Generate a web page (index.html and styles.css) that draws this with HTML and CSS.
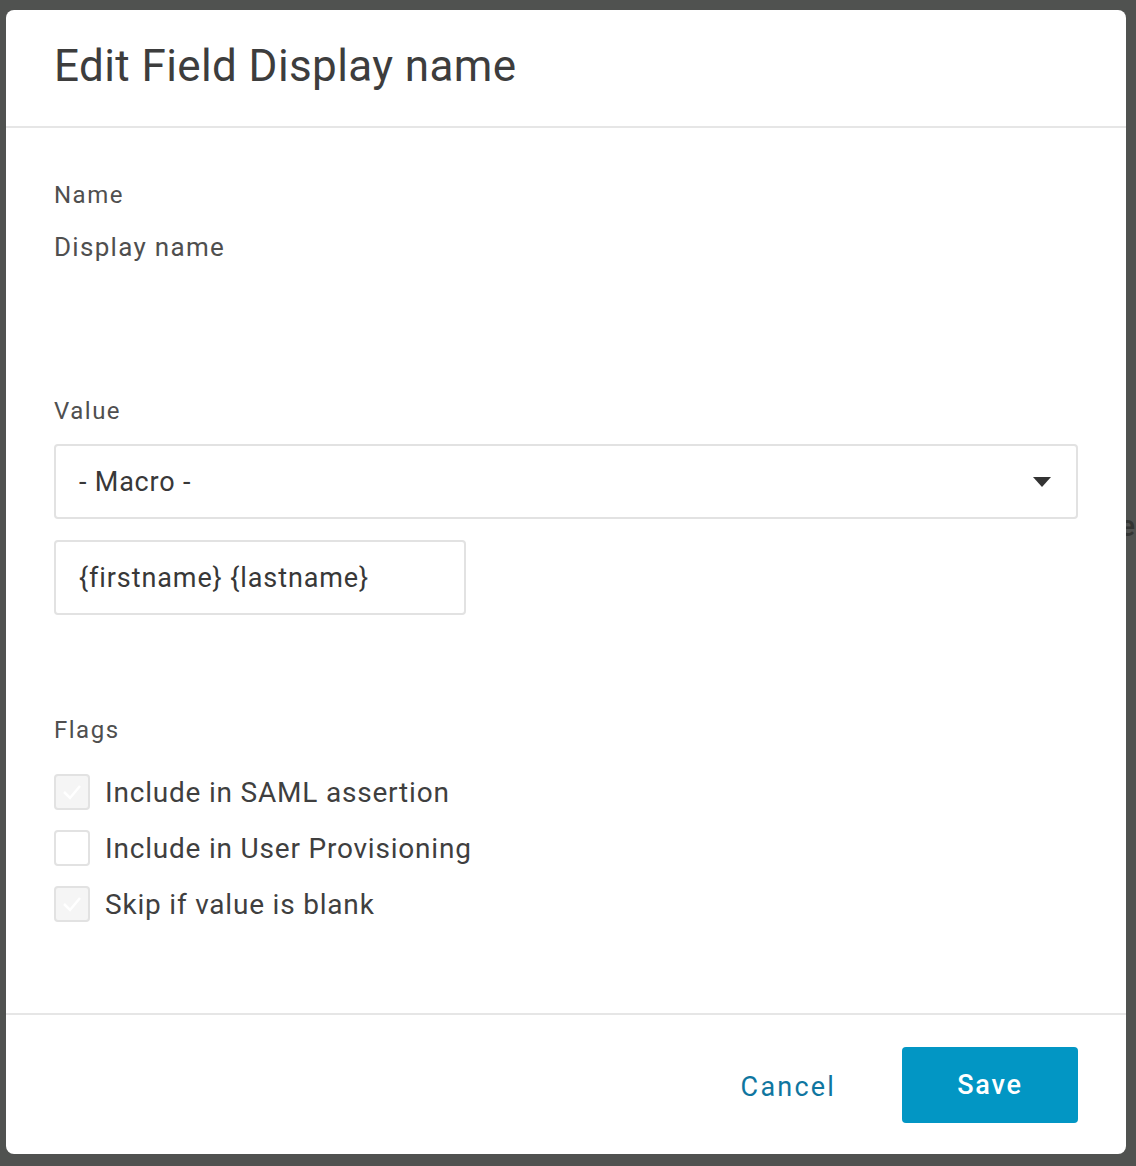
FILE: index.html
```html
<!DOCTYPE html>
<html lang="en">
<head>
    <meta charset="UTF-8">
    <meta name="viewport" content="width=device-width, initial-scale=1.0">
    <title>Edit Field Display name</title>
    <link rel="stylesheet" href="styles.css">
</head>
<body>

<span class="backdrop-letter">e</span>

<div class="dialog">
    <div class="dialog-header">
        <h1>Edit Field Display name</h1>
    </div>

    <div class="dialog-body">
        <div class="field">
            <div class="field-label">Name</div>
            <div class="field-value">Display name</div>
        </div>

        <div class="field field-value-group">
            <div class="field-label">Value</div>
            <div class="select">
                <span>- Macro -</span>
                <svg class="caret" width="18" height="10" viewBox="0 0 18 10">
                    <path d="M0 0 L18 0 L9 10 Z" fill="#333"/>
                </svg>
            </div>
            <div class="text-input">{firstname} {lastname}</div>
        </div>

        <div class="field field-flags">
            <div class="field-label">Flags</div>
            <label class="check">
                <span class="box box-checked">
                    <svg width="24" height="24" viewBox="0 0 24 24"><path d="M4 12 L10 18 L20 6" fill="none" stroke="#fff" stroke-width="2.5"/></svg>
                </span>
                Include in SAML assertion
            </label>
            <label class="check">
                <span class="box"></span>
                Include in User Provisioning
            </label>
            <label class="check">
                <span class="box box-checked">
                    <svg width="24" height="24" viewBox="0 0 24 24"><path d="M4 12 L10 18 L20 6" fill="none" stroke="#fff" stroke-width="2.5"/></svg>
                </span>
                Skip if value is blank
            </label>
        </div>
    </div>

    <div class="dialog-footer">
        <button class="btn-link" type="button">Cancel</button>
        <button class="btn-primary" type="button">Save</button>
    </div>
</div>

</body>
</html>
```

FILE: styles.css
```css
html, body {
    margin: 0;
    height: 100%;
}

body {
    background-color: #505250;
    font-family: Roboto, "Liberation Sans", sans-serif;
    padding: 10px 0 0 6px;
    box-sizing: border-box;
    overflow: hidden;
}

.backdrop-letter {
    position: absolute;
    left: 1119px;
    top: 508px;
    font-size: 30px;
    font-weight: 500;
    color: #333533;
}

.dialog {
    position: relative;
    width: 1120px;
    height: 1144px;
    background: #fff;
    border-radius: 8px;
    display: flex;
    flex-direction: column;
}

.dialog-header {
    height: 116px;
    border-bottom: 2px solid #e6e6e6;
    padding: 0 48px;
    display: flex;
    align-items: center;
}

.dialog-header h1 {
    margin: 0 0 4px 0;
    font-size: 44px;
    font-weight: 400;
    color: #3d3d3d;
    letter-spacing: 0.4px;
}

.dialog-body {
    flex: 1;
    padding: 52px 48px 0 48px;
}

.field-label {
    font-size: 24px;
    color: #4f4f4f;
    line-height: 30px;
    letter-spacing: 1.5px;
}

.field-value {
    font-size: 26px;
    color: #4f4f4f;
    line-height: 30px;
    margin-top: 22px;
    letter-spacing: 1.3px;
}

.field-value-group {
    margin-top: 134px;
}

.select {
    margin-top: 18px;
    height: 75px;
    box-sizing: border-box;
    border: 2px solid #e2e2e2;
    border-radius: 4px;
    padding: 0 25px 0 23px;
    display: flex;
    align-items: center;
    justify-content: space-between;
    font-size: 27px;
    letter-spacing: 0.8px;
    color: #383838;
}

.text-input {
    margin-top: 21px;
    width: 412px;
    height: 75px;
    box-sizing: border-box;
    border: 2px solid #e2e2e2;
    border-radius: 4px;
    padding: 0 23px;
    display: flex;
    align-items: center;
    font-size: 27px;
    letter-spacing: 0.9px;
    color: #383838;
}

.field-flags {
    margin-top: 100px;
}

.field-flags .field-label {
    margin-bottom: 29px;
}

.check {
    display: flex;
    align-items: center;
    gap: 15px;
    height: 36px;
    margin-bottom: 20px;
    font-size: 28px;
    color: #3f3f3f;
    letter-spacing: 0.8px;
}

.box {
    width: 36px;
    height: 36px;
    box-sizing: border-box;
    border: 2px solid #e2e2e2;
    border-radius: 4px;
    background: #fff;
    display: flex;
    align-items: center;
    justify-content: center;
}

.box-checked {
    background: #f5f5f5;
}

.dialog-footer {
    height: 139px;
    border-top: 2px solid #e6e6e6;
    display: flex;
    align-items: center;
    justify-content: flex-end;
    padding: 0 48px 0 0;
    gap: 66px;
}

.btn-link {
    background: none;
    border: none;
    font-family: inherit;
    font-size: 27px;
    color: #0f76a0;
    letter-spacing: 2.2px;
    padding: 0;
    margin-top: 4px;
}

.btn-primary {
    width: 176px;
    height: 76px;
    background-color: #0296c4;
    color: #fff;
    border: none;
    border-radius: 4px;
    font-family: inherit;
    font-size: 27px;
    font-weight: 500;
    letter-spacing: 1.8px;
}
```
